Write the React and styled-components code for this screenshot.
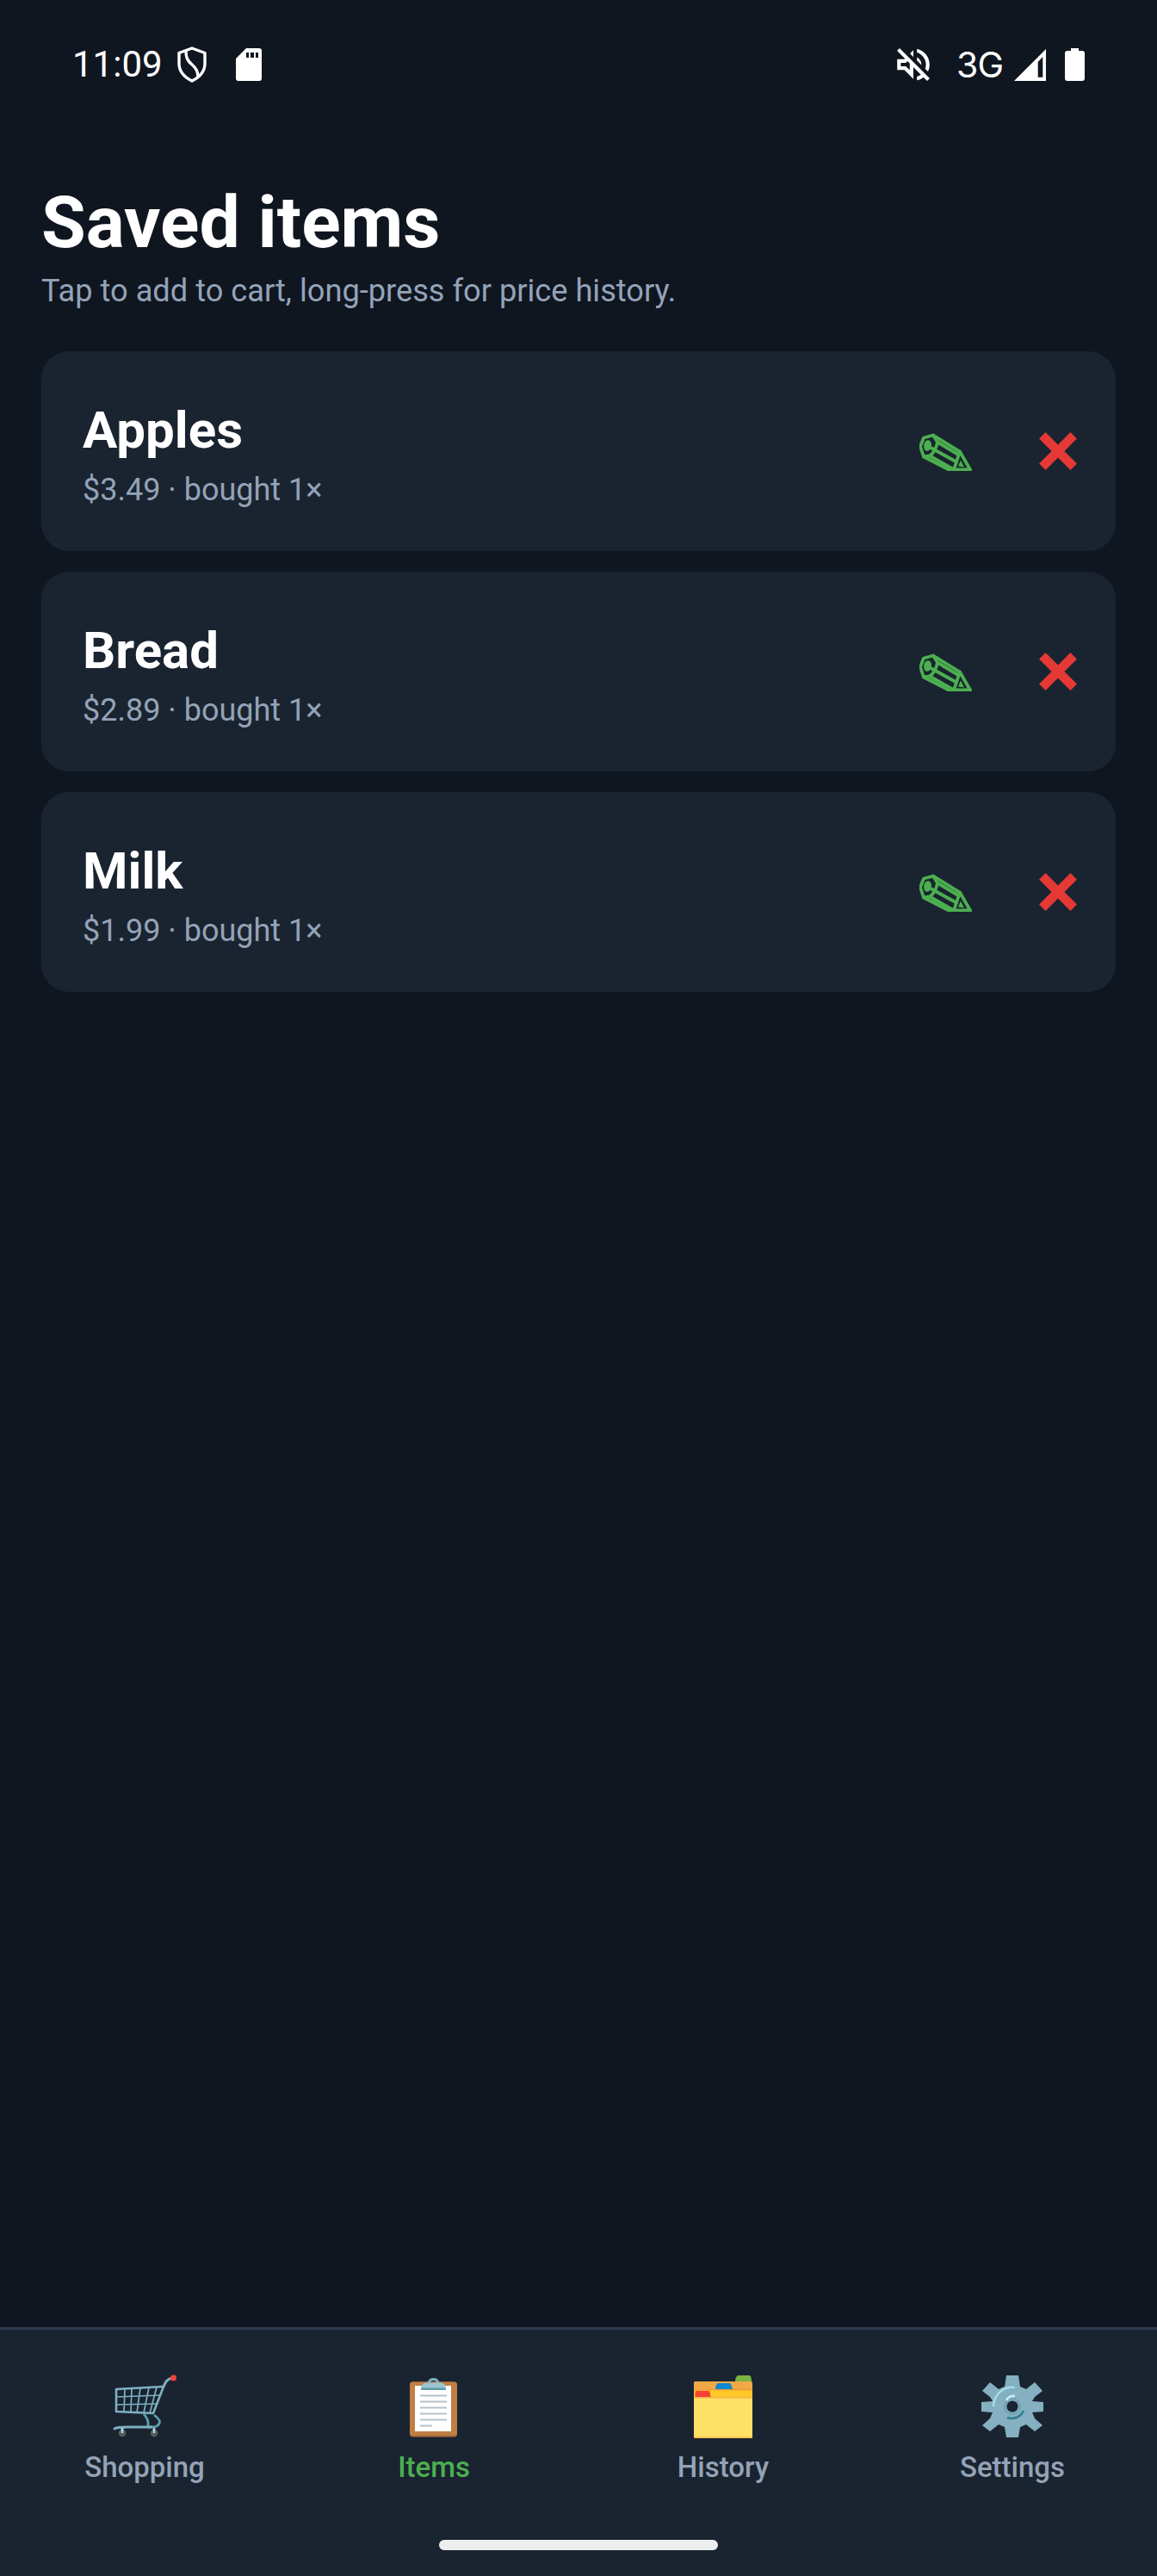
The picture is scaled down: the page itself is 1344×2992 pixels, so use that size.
import React from "react";
import styled, { createGlobalStyle } from "styled-components";

const GlobalStyle = createGlobalStyle`
  html, body {
    margin: 0;
    padding: 0;
    background: #0f1620;
  }
  * {
    box-sizing: border-box;
  }
`;

const Page = styled.div`
  display: flex;
  flex-direction: column;
  width: 1344px;
  height: 2992px;
  background: #0f1620;
  color: #fff;
  font-family: Roboto, "Noto Sans", sans-serif;
  overflow: hidden;
`;

const StatusBar = styled.div`
  display: flex;
  justify-content: space-between;
  height: 150px;
  padding: 50px 84px 0 84px;
  flex-shrink: 0;
`;

const StatusGroup = styled.div`
  display: flex;
  align-items: center;
  height: 50px;
`;

const StatusGap = styled.span`
  width: ${(props) => props.$size}px;
`;

const Clock = styled.span`
  font-size: 42px;
  line-height: 50px;
  margin-right: 17px;
`;

const Network = styled.span`
  font-family: Inter, Roboto, sans-serif;
  font-size: 41px;
  line-height: 50px;
  margin: 0 13px 0 31px;
  letter-spacing: -1px;
`;

const Main = styled.main`
  flex: 1;
  padding: 59px 48px 0;
`;

const Title = styled.h1`
  margin: 0;
  font-size: 84px;
  line-height: 100px;
  font-weight: 700;
  color: #fff;
`;

const Subtitle = styled.p`
  margin: 5px 0 46px;
  font-size: 36.2px;
  line-height: 48px;
  color: #94a3b8;
`;

const ItemList = styled.div`
  display: flex;
  flex-direction: column;
  gap: 24px;
`;

const ItemCard = styled.div`
  display: flex;
  align-items: center;
  height: 232px;
  padding: 0 45px 0 48px;
  background: #1a2430;
  border-radius: 32px;
`;

const ItemText = styled.div`
  flex: 1;
  padding-top: 9px;
`;

const ItemName = styled.div`
  font-size: 60px;
  line-height: 72px;
  font-weight: 700;
`;

const ItemMeta = styled.div`
  margin-top: 9px;
  font-size: 36px;
  line-height: 48px;
  color: #94a3b8;
`;

const ActionRow = styled.div`
  display: flex;
  align-items: center;
  gap: 77px;
`;

const TabBar = styled.nav`
  flex-shrink: 0;
  height: 289px;
  background: #1a2430;
  border-top: 3px solid #2e3d50;
  display: flex;
  flex-direction: column;
`;

const TabRow = styled.div`
  display: grid;
  grid-template-columns: repeat(4, 1fr);
  padding-top: 52px;
`;

const Tab = styled.div`
  display: flex;
  flex-direction: column;
  align-items: center;
`;

const TabIcon = styled.div`
  display: flex;
  justify-content: center;
  align-items: center;
  height: 74px;
`;

const TabLabel = styled.span`
  margin-top: 14px;
  font-size: 33px;
  line-height: 40px;
  font-weight: 500;
  color: ${(props) => (props.$active ? "#4caf50" : "#94a3b8")};
`;

const HomeBar = styled.div`
  width: 324px;
  height: 12px;
  border-radius: 6px;
  background: #eceef0;
  margin: 64px auto 0;
`;

const ShieldIcon = () => (
  <svg width="34" height="42" viewBox="0 0 34 42" fill="none" stroke="#fff" strokeWidth="3.4">
    <path d="M17 2 L32 7.5 V20 C32 29 25 36 17 40 C9 36 2 29 2 20 V7.5 Z" strokeLinejoin="round" />
    <path d="M10 5 C10 12 11 16 17 21 C23 26 24 30 24 35" />
  </svg>
);

const SdIcon = () => (
  <svg width="30" height="38" viewBox="0 0 30 38">
    <path
      fill="#fff"
      fillRule="evenodd"
      d="M12 0 H27 A3 3 0 0 1 30 3 V35 A3 3 0 0 1 27 38 H3 A3 3 0 0 1 0 35 V12 Z M12 5 V11 H15 V5 Z M17 5 V11 H21 V5 Z M23 5 V11 H26 V5 Z"
    />
  </svg>
);

const MuteIcon = () => (
  <svg width="38" height="38" viewBox="2.9 2.9 18.2 18.2">
    <path
      fill="#fff"
      fillRule="evenodd"
      d="M4.34 2.93 L2.93 4.34 L7.29 8.7 L7 9 H3 v6 h4 l5 5 v-6.59 l4.18 4.18 c-.65.49-1.38.88-2.18 1.11 v2.06 c1.34-.3 2.57-.92 3.61-1.75 l2.05 2.05 1.41-1.41 L4.34 2.93z M10 15.17 L7.83 13 H5 v-2 h2.83 l.88-.88 L10 11.41 v3.76z M19 12 c0 .82-.15 1.61-.41 2.34 l1.53 1.53 c.56-1.17.88-2.48.88-3.87 0-4.28-2.99-7.86-7-8.77 v2.06 c2.89.86 5 3.54 5 6.71z M12 4 l-1.88 1.88 L12 7.76 z M16.5 12 c0-1.77-1.02-3.29-2.5-4.03 v1.79 l2.48 2.48 c.01-.08.02-.16.02-.24z"
    />
  </svg>
);

const SignalIcon = () => (
  <svg width="37" height="37" viewBox="0 0 37 37">
    <path
      fill="#fff"
      fillRule="evenodd"
      d="M37 0 V37 H0 Z M33.3 9 L27.7 15 V32.7 H33.3 Z"
    />
  </svg>
);

const BatteryIcon = () => (
  <svg width="23" height="38" viewBox="0 0 23 38">
    <path
      fill="#fff"
      d="M7 0 H16 V3 H20 A3 3 0 0 1 23 6 V35 A3 3 0 0 1 20 38 H3 A3 3 0 0 1 0 35 V6 A3 3 0 0 1 3 3 H7 Z"
    />
  </svg>
);

// pencil emoji outline, coords read off the 3x crop
const PencilIcon = () => (
  <svg width="62" height="46" viewBox="1 -1.5 62 46" fill="none" stroke="#4caf50" strokeWidth="3.8" strokeLinejoin="round" strokeLinecap="round">
    <path d="M6 6 L17 3 L48 22 L60 43 L37 44 L6 28 L2 16 Z" />
    <path d="M17 3 L22 11 Q20 22 13 27 L6 28" />
    <path d="M22 11 L47 26" />
    <path d="M15 18 L44 34" />
    <path d="M13 27 L41 43" />
    <path d="M48 22 L41 43 L60 43" />
    <path d="M49 32 L53 40 L46 39 Z" fill="#4caf50" stroke="none" />
    <ellipse cx="10.5" cy="15" rx="4.4" ry="6.4" transform="rotate(10 10.5 15)" fill="#4caf50" stroke="none" />
  </svg>
);

const CrossIcon = () => (
  <svg width="44" height="44" viewBox="0 0 44 44" stroke="#e53935" strokeWidth="10.6">
    <path d="M3.8 3.8 L40.2 40.2 M40.2 3.8 L3.8 40.2" />
  </svg>
);

const CartIcon = () => (
  <svg width="74" height="74" viewBox="0 0 74 74" fill="none">
    <path d="M4 17 L59 14 L47 45 L4 43 Z" stroke="#7fb0c2" strokeWidth="2.6" strokeLinejoin="round" />
    <path
      d="M4 26 L55 24 M4 35 L51 34 M14 16.5 L13 44 M22 16 L21 44 M32 15.5 L28 44.5 M42 15 L36 44.5 M51 14.5 L43 45"
      stroke="#7fb0c2"
      strokeWidth="1.7"
    />
    <path d="M59 14 C61 9 63 5 69 4" stroke="#7fb0c2" strokeWidth="3" strokeLinecap="round" />
    <path d="M36 46 C39 49 42 53 41 60 M48 47 C52 50 56 54 54 57 C52 61 49 61 41 61" stroke="#5d9fb0" strokeWidth="2.8" />
    <path d="M2 63 C5 61 10 61 16 61 L45 61" stroke="#7fb0c2" strokeWidth="2.8" strokeLinecap="round" />
    <circle cx="11" cy="68" r="4.4" fill="#5a5a5a" />
    <circle cx="48" cy="68" r="4.4" fill="#5a5a5a" />
    <path d="M11 62 V68 M48 62 V68" stroke="#a5dcea" strokeWidth="2.6" />
    <circle cx="70.5" cy="4" r="3.4" fill="#f44336" />
  </svg>
);

const ClipboardIcon = () => (
  <svg width="56" height="72" viewBox="0 0 56 72">
    <rect x="0" y="7.5" width="55" height="64" rx="3.5" fill="#a86f3c" />
    <rect x="0" y="7.5" width="55" height="62" rx="3.5" fill="#c07f43" />
    <rect x="6" y="12" width="42" height="53" fill="#fff" />
    <path
      d="M12 23.5 H43 M12 30.5 H43 M12 37.5 H43 M12 44.5 H43 M12 51.5 H43 M12 58.5 H26"
      stroke="#b4c2ca"
      strokeWidth="1.9"
    />
    <path d="M22 9 A5.6 5.6 0 0 1 33 9" fill="none" stroke="#7fb0c2" strokeWidth="3" />
    <path d="M13 16 C13 11 15 8.5 20 8.5 H35 C40 8.5 42 11 42 16 Z" fill="#9cc4d2" />
    <rect x="13" y="14.5" width="29" height="2.4" rx="1" fill="#5f9aaa" />
  </svg>
);

const FolderIcon = () => (
  <svg width="68" height="73" viewBox="0 0 68 73">
    <path d="M48 8 C48 2 50 0 52 0 H64 C66 0 67 2 67 8 Z" fill="#7cb342" />
    <rect x="0" y="7" width="68" height="14" rx="1.5" fill="#f2a846" />
    <path d="M25 17 C25 11 27 9 29 9 H41 C43 9 44 11 45 17 Z" fill="#0b88d0" />
    <rect x="0" y="16" width="68" height="11" fill="#ffc828" />
    <rect x="0" y="16" width="68" height="1.4" fill="#ee9a3a" />
    <path d="M1.5 25 V20 C1.5 18.5 2 18 3.5 18 H17 C18 18 19 20 19.5 25 Z" fill="#f44336" />
    <rect x="0" y="25" width="68" height="48" rx="1.5" fill="#ffe066" />
    <rect x="0" y="25" width="68" height="1.6" fill="#f2b84a" />
    <rect x="0" y="71.5" width="68" height="1.5" rx="0.7" fill="#f2b84a" />
  </svg>
);

const GearIcon = () => (
  <svg width="72" height="72" viewBox="0 0 72 72" fill="none">
    <path
      fill="#84b0c1"
      d="M29 0 H43 L45 13 L52 16 L62 8 L71 18 L62 25 L59 30 L72 31 V42 L59 43 L62 50 L71 58 L62 65 L52 57 L45 60 L43 72 H29 L27 60 L20 57 L10 65 L1 58 L10 50 L13 43 L0 42 V31 L13 30 L10 25 L1 18 L10 8 L20 16 L27 13 Z"
    />
    <circle cx="36" cy="36" r="6.6" fill="#1a2430" />
    <circle cx="36" cy="36" r="9" stroke="#5f9aaa" strokeWidth="2" opacity="0.6" />
    <path d="M14 36 A22 22 0 0 1 39 14" stroke="#a5dcea" strokeWidth="2.4" />
    <path d="M29 29 A10 10 0 0 1 39 24" stroke="#c4eef5" strokeWidth="2.6" />
    <path d="M30 49 A15 15 0 0 0 49 41" stroke="#2f7f90" strokeWidth="2.6" />
  </svg>
);

const items = [
  { name: "Apples", price: "$3.49" },
  { name: "Bread", price: "$2.89" },
  { name: "Milk", price: "$1.99" },
];

const tabs = [
  { label: "Shopping", icon: <CartIcon /> },
  { label: "Items", icon: <ClipboardIcon />, active: true },
  { label: "History", icon: <FolderIcon /> },
  { label: "Settings", icon: <GearIcon /> },
];

const App = () => {
  return (
    <Page>
      <GlobalStyle />
      <StatusBar>
        <StatusGroup>
          <Clock>11:09</Clock>
          <ShieldIcon />
          <StatusGap $size={34} />
          <SdIcon />
        </StatusGroup>
        <StatusGroup>
          <MuteIcon />
          <Network>3G</Network>
          <SignalIcon />
          <StatusGap $size={22} />
          <BatteryIcon />
        </StatusGroup>
      </StatusBar>
      <Main>
        <Title>Saved items</Title>
        <Subtitle>Tap to add to cart, long-press for price history.</Subtitle>
        <ItemList>
          {items.map((item) => (
            <ItemCard key={item.name}>
              <ItemText>
                <ItemName>{item.name}</ItemName>
                <ItemMeta>{item.price} · bought 1×</ItemMeta>
              </ItemText>
              <ActionRow>
                <PencilIcon />
                <CrossIcon />
              </ActionRow>
            </ItemCard>
          ))}
        </ItemList>
      </Main>
      <TabBar>
        <TabRow>
          {tabs.map((tab) => (
            <Tab key={tab.label}>
              <TabIcon>{tab.icon}</TabIcon>
              <TabLabel $active={tab.active}>{tab.label}</TabLabel>
            </Tab>
          ))}
        </TabRow>
        <HomeBar />
      </TabBar>
    </Page>
  );
};

export default App;
